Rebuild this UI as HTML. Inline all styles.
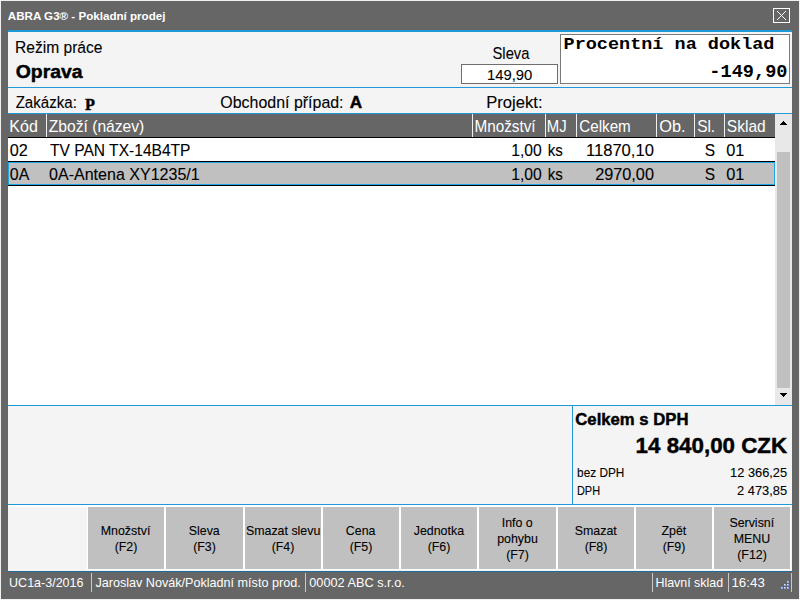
<!DOCTYPE html>
<html><head><meta charset="utf-8"><style>html,body{margin:0;padding:0;width:800px;height:600px;overflow:hidden;background:#666}svg{display:block}</style></head>
<body><svg width="800" height="600" viewBox="0 0 800 600">
<g shape-rendering="crispEdges">
<rect x="0" y="0" width="800" height="600" fill="#f0f0f0"/>
<rect x="1" y="1" width="798" height="598" fill="#666666"/>
<rect x="8" y="30" width="784" height="2" fill="#1e9bd7"/>
<rect x="8" y="32" width="784" height="55" fill="#f4f4f4"/>
<rect x="461" y="64" width="97" height="20" fill="#6e6e6e"/>
<rect x="462" y="65" width="95" height="18" fill="#fff"/>
<rect x="560" y="34" width="230" height="50" fill="#7a7a7a"/>
<rect x="561" y="35" width="228" height="48" fill="#fff"/>
<rect x="8" y="87" width="784" height="1" fill="#1e9bd7"/>
<rect x="8" y="88" width="784" height="25" fill="#f4f4f4"/>
<rect x="8" y="113" width="784" height="1" fill="#1e9bd7"/>
<rect x="8" y="114" width="767" height="23" fill="#666666"/>
<rect x="8" y="137" width="767" height="1" fill="#000"/>
<rect x="8" y="138" width="767" height="267" fill="#fff"/>
<rect x="46" y="114" width="1" height="23" fill="#f0f0f0"/>
<rect x="472" y="114" width="1" height="23" fill="#f0f0f0"/>
<rect x="545" y="114" width="1" height="23" fill="#f0f0f0"/>
<rect x="576" y="114" width="1" height="23" fill="#f0f0f0"/>
<rect x="656" y="114" width="1" height="23" fill="#f0f0f0"/>
<rect x="694" y="114" width="1" height="23" fill="#f0f0f0"/>
<rect x="724" y="114" width="1" height="23" fill="#f0f0f0"/>
<rect x="8" y="161" width="767" height="25" fill="#000"/>
<rect x="8" y="162" width="767" height="23" fill="#1ea6e6"/>
<rect x="9" y="163" width="765" height="21" fill="#c0c0c0"/>
<rect x="775" y="114" width="17" height="291" fill="#e8e8e8"/>
<rect x="777" y="152" width="13" height="236" fill="#c0c0c0"/>
<polygon points="779.5,125 787.5,125 783.5,121" fill="#000"/>
<polygon points="779.5,393 787.5,393 783.5,397" fill="#000"/>
<rect x="8" y="405" width="784" height="1" fill="#1e9bd7"/>
<rect x="8" y="406" width="784" height="98" fill="#f4f4f4"/>
<rect x="572" y="406" width="1" height="98" fill="#1e9bd7"/>
<rect x="573" y="406" width="1" height="98" fill="#fff"/>
<rect x="8" y="504" width="784" height="1" fill="#1e9bd7"/>
<rect x="8" y="505" width="784" height="66" fill="#f4f4f4"/>
<rect x="8" y="505" width="784" height="2" fill="#fff"/>
<rect x="87" y="506" width="78" height="64" fill="#fff"/>
<rect x="88" y="507" width="76" height="62" fill="#c0c0c0"/>
<rect x="165" y="506" width="79" height="64" fill="#fff"/>
<rect x="166" y="507" width="77" height="62" fill="#c0c0c0"/>
<rect x="244" y="506" width="78" height="64" fill="#fff"/>
<rect x="245" y="507" width="76" height="62" fill="#c0c0c0"/>
<rect x="322" y="506" width="78" height="64" fill="#fff"/>
<rect x="323" y="507" width="76" height="62" fill="#c0c0c0"/>
<rect x="400" y="506" width="78" height="64" fill="#fff"/>
<rect x="401" y="507" width="76" height="62" fill="#c0c0c0"/>
<rect x="478" y="506" width="79" height="64" fill="#fff"/>
<rect x="479" y="507" width="77" height="62" fill="#c0c0c0"/>
<rect x="557" y="506" width="78" height="64" fill="#fff"/>
<rect x="558" y="507" width="76" height="62" fill="#c0c0c0"/>
<rect x="635" y="506" width="78" height="64" fill="#fff"/>
<rect x="636" y="507" width="76" height="62" fill="#c0c0c0"/>
<rect x="713" y="506" width="78" height="64" fill="#fff"/>
<rect x="714" y="507" width="76" height="62" fill="#c0c0c0"/>
<rect x="8" y="571" width="784" height="1" fill="#1f6d9e"/>
<rect x="91" y="573" width="1" height="19" fill="#c8c8c8"/>
<rect x="305" y="573" width="1" height="19" fill="#c8c8c8"/>
<rect x="652" y="573" width="1" height="19" fill="#c8c8c8"/>
<rect x="728" y="573" width="1" height="19" fill="#c8c8c8"/>
<rect x="791" y="573" width="1" height="19" fill="#c8c8c8"/>
<rect x="787" y="581" width="2" height="2" fill="#86a8f8"/>
<rect x="787" y="581" width="1" height="1" fill="#d8e6ff"/>
<rect x="784" y="584" width="2" height="2" fill="#86a8f8"/>
<rect x="784" y="584" width="1" height="1" fill="#d8e6ff"/>
<rect x="787" y="584" width="2" height="2" fill="#86a8f8"/>
<rect x="787" y="584" width="1" height="1" fill="#d8e6ff"/>
<rect x="781" y="587" width="2" height="2" fill="#86a8f8"/>
<rect x="781" y="587" width="1" height="1" fill="#d8e6ff"/>
<rect x="784" y="587" width="2" height="2" fill="#86a8f8"/>
<rect x="784" y="587" width="1" height="1" fill="#d8e6ff"/>
<rect x="787" y="587" width="2" height="2" fill="#86a8f8"/>
<rect x="787" y="587" width="1" height="1" fill="#d8e6ff"/>
<rect x="773.5" y="8.5" width="16" height="14" fill="none" stroke="#fff" stroke-width="1"/>
<path d="M777 11 L786 20 M786 11 L777 20" stroke="#fff" stroke-width="1" fill="none"/>
</g>
<g>
<text x="7.80" y="20" font-family="Liberation Sans" font-size="11.38" font-weight="700" fill="#fff" stroke="#fff" stroke-width="0.0" textLength="157.68" lengthAdjust="spacingAndGlyphs">ABRA G3® - Pokladní prodej</text>
<text x="15.11" y="53" font-family="Liberation Sans" font-size="15.65" font-weight="400" fill="#000" stroke="#000" stroke-width="0.1" textLength="87.34" lengthAdjust="spacingAndGlyphs">Režim práce</text>
<text x="15.77" y="78" font-family="Liberation Sans" font-size="19.20" font-weight="700" fill="#000" stroke="#000" stroke-width="0.45" textLength="66.88" lengthAdjust="spacingAndGlyphs">Oprava</text>
<text x="492.52" y="59" font-family="Liberation Sans" font-size="16.36" font-weight="400" fill="#000" stroke="#000" stroke-width="0.1" textLength="36.93" lengthAdjust="spacingAndGlyphs">Sleva</text>
<text x="486.91" y="80" font-family="Liberation Sans" font-size="14.22" font-weight="400" fill="#000" stroke="#000" stroke-width="0.1" textLength="45.38" lengthAdjust="spacingAndGlyphs">149,90</text>
<text x="563.57" y="49" font-family="Liberation Mono" font-size="16.37" font-weight="700" fill="#000" stroke="#000" stroke-width="0.0" textLength="210.89" lengthAdjust="spacingAndGlyphs">Procentní na doklad</text>
<text x="709.35" y="77" font-family="Liberation Mono" font-size="18.30" font-weight="700" fill="#000" stroke="#000" stroke-width="0.0" textLength="78.15" lengthAdjust="spacingAndGlyphs">-149,90</text>
<text x="15.66" y="108" font-family="Liberation Sans" font-size="15.65" font-weight="400" fill="#000" stroke="#000" stroke-width="0.1" textLength="61.18" lengthAdjust="spacingAndGlyphs">Zakázka:</text>
<text x="84.95" y="110" font-family="Liberation Serif" font-size="17.53" font-weight="700" fill="#000" stroke="#000" stroke-width="0.45" textLength="9.90" lengthAdjust="spacingAndGlyphs">P</text>
<text x="220.37" y="108" font-family="Liberation Sans" font-size="16.36" font-weight="400" fill="#000" stroke="#000" stroke-width="0.1" textLength="123.19" lengthAdjust="spacingAndGlyphs">Obchodní případ:</text>
<text x="349.81" y="108" font-family="Liberation Sans" font-size="16.36" font-weight="700" fill="#000" stroke="#000" stroke-width="0.45" textLength="12.40" lengthAdjust="spacingAndGlyphs">A</text>
<text x="486.28" y="108" font-family="Liberation Sans" font-size="15.65" font-weight="400" fill="#000" stroke="#000" stroke-width="0.1" textLength="56.30" lengthAdjust="spacingAndGlyphs">Projekt:</text>
<text x="9.32" y="132" font-family="Liberation Sans" font-size="16.36" font-weight="400" fill="#fff" stroke="#fff" stroke-width="0.0" textLength="28.55" lengthAdjust="spacingAndGlyphs">Kód</text>
<text x="48.82" y="132" font-family="Liberation Sans" font-size="16.36" font-weight="400" fill="#fff" stroke="#fff" stroke-width="0.0" textLength="95.48" lengthAdjust="spacingAndGlyphs">Zboží (název)</text>
<text x="474.38" y="132" font-family="Liberation Sans" font-size="16.36" font-weight="400" fill="#fff" stroke="#fff" stroke-width="0.0" textLength="61.26" lengthAdjust="spacingAndGlyphs">Množství</text>
<text x="546.82" y="132" font-family="Liberation Sans" font-size="16.36" font-weight="400" fill="#fff" stroke="#fff" stroke-width="0.0" textLength="19.86" lengthAdjust="spacingAndGlyphs">MJ</text>
<text x="579.26" y="132" font-family="Liberation Sans" font-size="16.36" font-weight="400" fill="#fff" stroke="#fff" stroke-width="0.0" textLength="51.50" lengthAdjust="spacingAndGlyphs">Celkem</text>
<text x="659.30" y="132" font-family="Liberation Sans" font-size="16.36" font-weight="400" fill="#fff" stroke="#fff" stroke-width="0.0" textLength="26.34" lengthAdjust="spacingAndGlyphs">Ob.</text>
<text x="697.14" y="132" font-family="Liberation Sans" font-size="16.36" font-weight="400" fill="#fff" stroke="#fff" stroke-width="0.0" textLength="18.03" lengthAdjust="spacingAndGlyphs">Sl.</text>
<text x="726.83" y="132" font-family="Liberation Sans" font-size="16.36" font-weight="400" fill="#fff" stroke="#fff" stroke-width="0.0" textLength="38.91" lengthAdjust="spacingAndGlyphs">Sklad</text>
<text x="9.75" y="156" font-family="Liberation Sans" font-size="16.36" font-weight="400" fill="#000" stroke="#000" stroke-width="0.1" textLength="18.09" lengthAdjust="spacingAndGlyphs">02</text>
<text x="49.96" y="156" font-family="Liberation Sans" font-size="16.36" font-weight="400" fill="#000" stroke="#000" stroke-width="0.1" textLength="140.56" lengthAdjust="spacingAndGlyphs">TV PAN TX-14B4TP</text>
<text x="511.30" y="156" font-family="Liberation Sans" font-size="16.36" font-weight="400" fill="#000" stroke="#000" stroke-width="0.1" textLength="30.52" lengthAdjust="spacingAndGlyphs">1,00</text>
<text x="547.74" y="156" font-family="Liberation Sans" font-size="16.36" font-weight="400" fill="#000" stroke="#000" stroke-width="0.1" textLength="15.04" lengthAdjust="spacingAndGlyphs">ks</text>
<text x="585.93" y="156" font-family="Liberation Sans" font-size="16.36" font-weight="400" fill="#000" stroke="#000" stroke-width="0.1" textLength="68.02" lengthAdjust="spacingAndGlyphs">11870,10</text>
<text x="704.79" y="156" font-family="Liberation Sans" font-size="16.36" font-weight="400" fill="#000" stroke="#000" stroke-width="0.1" textLength="10.34" lengthAdjust="spacingAndGlyphs">S</text>
<text x="726.25" y="156" font-family="Liberation Sans" font-size="16.36" font-weight="400" fill="#000" stroke="#000" stroke-width="0.1" textLength="18.20" lengthAdjust="spacingAndGlyphs">01</text>
<text x="9.77" y="180" font-family="Liberation Sans" font-size="16.36" font-weight="400" fill="#000" stroke="#000" stroke-width="0.1" textLength="19.49" lengthAdjust="spacingAndGlyphs">0A</text>
<text x="49.06" y="180" font-family="Liberation Sans" font-size="16.36" font-weight="400" fill="#000" stroke="#000" stroke-width="0.1" textLength="150.67" lengthAdjust="spacingAndGlyphs">0A-Antena XY1235/1</text>
<text x="511.30" y="180" font-family="Liberation Sans" font-size="16.36" font-weight="400" fill="#000" stroke="#000" stroke-width="0.1" textLength="30.52" lengthAdjust="spacingAndGlyphs">1,00</text>
<text x="547.74" y="180" font-family="Liberation Sans" font-size="16.36" font-weight="400" fill="#000" stroke="#000" stroke-width="0.1" textLength="15.04" lengthAdjust="spacingAndGlyphs">ks</text>
<text x="595.15" y="180" font-family="Liberation Sans" font-size="16.36" font-weight="400" fill="#000" stroke="#000" stroke-width="0.1" textLength="58.79" lengthAdjust="spacingAndGlyphs">2970,00</text>
<text x="704.79" y="180" font-family="Liberation Sans" font-size="16.36" font-weight="400" fill="#000" stroke="#000" stroke-width="0.1" textLength="10.34" lengthAdjust="spacingAndGlyphs">S</text>
<text x="726.25" y="180" font-family="Liberation Sans" font-size="16.36" font-weight="400" fill="#000" stroke="#000" stroke-width="0.1" textLength="18.20" lengthAdjust="spacingAndGlyphs">01</text>
<text x="575.32" y="425" font-family="Liberation Sans" font-size="16.50" font-weight="700" fill="#000" stroke="#000" stroke-width="0.45" textLength="113.18" lengthAdjust="spacingAndGlyphs">Celkem s DPH</text>
<text x="635.61" y="453" font-family="Liberation Sans" font-size="22.05" font-weight="700" fill="#000" stroke="#000" stroke-width="0.45" textLength="151.49" lengthAdjust="spacingAndGlyphs">14 840,00 CZK</text>
<text x="577.07" y="477" font-family="Liberation Sans" font-size="12.09" font-weight="400" fill="#000" stroke="#000" stroke-width="0.1" textLength="47.29" lengthAdjust="spacingAndGlyphs">bez DPH</text>
<text x="730.10" y="477" font-family="Liberation Sans" font-size="12.09" font-weight="400" fill="#000" stroke="#000" stroke-width="0.1" textLength="57.00" lengthAdjust="spacingAndGlyphs">12 366,25</text>
<text x="576.93" y="495" font-family="Liberation Sans" font-size="12.09" font-weight="400" fill="#000" stroke="#000" stroke-width="0.1" textLength="23.16" lengthAdjust="spacingAndGlyphs">DPH</text>
<text x="737.11" y="495" font-family="Liberation Sans" font-size="12.09" font-weight="400" fill="#000" stroke="#000" stroke-width="0.1" textLength="49.99" lengthAdjust="spacingAndGlyphs">2 473,85</text>
<text x="9.10" y="587" font-family="Liberation Sans" font-size="12.52" font-weight="400" fill="#fff" stroke="#fff" stroke-width="0.0" textLength="74.36" lengthAdjust="spacingAndGlyphs">UC1a-3/2016</text>
<text x="95.40" y="587" font-family="Liberation Sans" font-size="12.52" font-weight="400" fill="#fff" stroke="#fff" stroke-width="0.0" textLength="205.29" lengthAdjust="spacingAndGlyphs">Jaroslav Novák/Pokladní místo prod.</text>
<text x="309.30" y="587" font-family="Liberation Sans" font-size="12.52" font-weight="400" fill="#fff" stroke="#fff" stroke-width="0.0" textLength="95.49" lengthAdjust="spacingAndGlyphs">00002 ABC s.r.o.</text>
<text x="655.41" y="587" font-family="Liberation Sans" font-size="12.52" font-weight="400" fill="#fff" stroke="#fff" stroke-width="0.0" textLength="67.75" lengthAdjust="spacingAndGlyphs">Hlavní sklad</text>
<text x="731.44" y="587" font-family="Liberation Sans" font-size="12.52" font-weight="400" fill="#fff" stroke="#fff" stroke-width="0.0" textLength="33.45" lengthAdjust="spacingAndGlyphs">16:43</text>
<text x="100.73" y="535" font-family="Liberation Sans" font-size="12.80" fill="#000" stroke="#000" stroke-width="0.1" textLength="49.62" lengthAdjust="spacingAndGlyphs">Množství</text>
<text x="114.66" y="551" font-family="Liberation Sans" font-size="12.80" fill="#000" stroke="#000" stroke-width="0.1" textLength="22.73" lengthAdjust="spacingAndGlyphs">(F2)</text>
<text x="188.71" y="535" font-family="Liberation Sans" font-size="12.80" fill="#000" stroke="#000" stroke-width="0.1" textLength="31.03" lengthAdjust="spacingAndGlyphs">Sleva</text>
<text x="193.16" y="551" font-family="Liberation Sans" font-size="12.80" fill="#000" stroke="#000" stroke-width="0.1" textLength="22.73" lengthAdjust="spacingAndGlyphs">(F3)</text>
<text x="245.93" y="535" font-family="Liberation Sans" font-size="12.80" fill="#000" stroke="#000" stroke-width="0.1" textLength="74.45" lengthAdjust="spacingAndGlyphs">Smazat slevu</text>
<text x="271.66" y="551" font-family="Liberation Sans" font-size="12.80" fill="#000" stroke="#000" stroke-width="0.1" textLength="22.73" lengthAdjust="spacingAndGlyphs">(F4)</text>
<text x="345.85" y="535" font-family="Liberation Sans" font-size="12.80" fill="#000" stroke="#000" stroke-width="0.1" textLength="29.65" lengthAdjust="spacingAndGlyphs">Cena</text>
<text x="349.66" y="551" font-family="Liberation Sans" font-size="12.80" fill="#000" stroke="#000" stroke-width="0.1" textLength="22.73" lengthAdjust="spacingAndGlyphs">(F5)</text>
<text x="413.69" y="535" font-family="Liberation Sans" font-size="12.80" fill="#000" stroke="#000" stroke-width="0.1" textLength="50.34" lengthAdjust="spacingAndGlyphs">Jednotka</text>
<text x="427.66" y="551" font-family="Liberation Sans" font-size="12.80" fill="#000" stroke="#000" stroke-width="0.1" textLength="22.73" lengthAdjust="spacingAndGlyphs">(F6)</text>
<text x="501.70" y="527" font-family="Liberation Sans" font-size="12.80" fill="#000" stroke="#000" stroke-width="0.1" textLength="31.03" lengthAdjust="spacingAndGlyphs">Info o</text>
<text x="497.16" y="543" font-family="Liberation Sans" font-size="12.80" fill="#000" stroke="#000" stroke-width="0.1" textLength="40.69" lengthAdjust="spacingAndGlyphs">pohybu</text>
<text x="506.16" y="559" font-family="Liberation Sans" font-size="12.80" fill="#000" stroke="#000" stroke-width="0.1" textLength="22.73" lengthAdjust="spacingAndGlyphs">(F7)</text>
<text x="574.76" y="535" font-family="Liberation Sans" font-size="12.80" fill="#000" stroke="#000" stroke-width="0.1" textLength="42.05" lengthAdjust="spacingAndGlyphs">Smazat</text>
<text x="584.66" y="551" font-family="Liberation Sans" font-size="12.80" fill="#000" stroke="#000" stroke-width="0.1" textLength="22.73" lengthAdjust="spacingAndGlyphs">(F8)</text>
<text x="661.42" y="535" font-family="Liberation Sans" font-size="12.80" fill="#000" stroke="#000" stroke-width="0.1" textLength="24.82" lengthAdjust="spacingAndGlyphs">Zpět</text>
<text x="662.66" y="551" font-family="Liberation Sans" font-size="12.80" fill="#000" stroke="#000" stroke-width="0.1" textLength="22.73" lengthAdjust="spacingAndGlyphs">(F9)</text>
<text x="729.38" y="527" font-family="Liberation Sans" font-size="12.80" fill="#000" stroke="#000" stroke-width="0.1" textLength="44.80" lengthAdjust="spacingAndGlyphs">Servisní</text>
<text x="733.71" y="543" font-family="Liberation Sans" font-size="12.80" fill="#000" stroke="#000" stroke-width="0.1" textLength="36.52" lengthAdjust="spacingAndGlyphs">MENU</text>
<text x="737.21" y="559" font-family="Liberation Sans" font-size="12.80" fill="#000" stroke="#000" stroke-width="0.1" textLength="29.63" lengthAdjust="spacingAndGlyphs">(F12)</text>
</g>
</svg></body></html>
